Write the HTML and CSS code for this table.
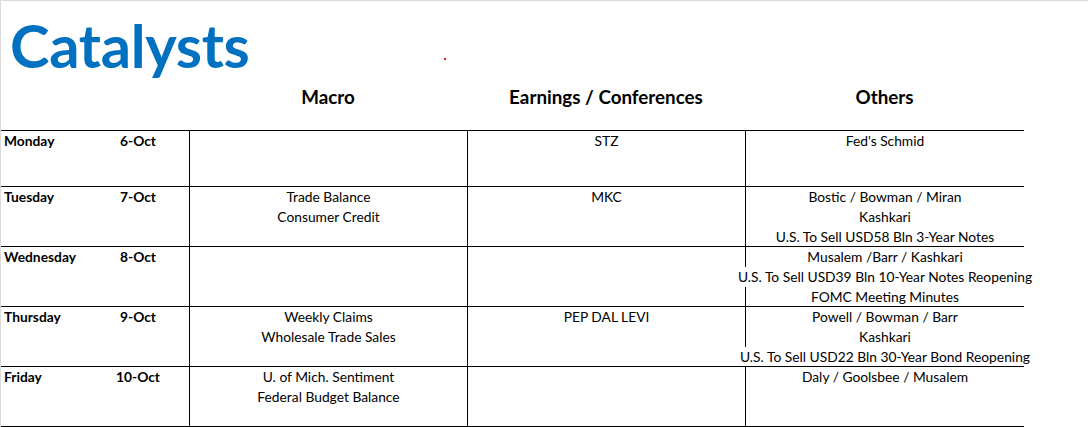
FILE: index.html
```html
<!DOCTYPE html>
<html lang="en">
<head>
<meta charset="utf-8">
<title>Catalysts</title>
<link rel="stylesheet" href="styles.css">
</head>
<body>
<div class="page">
  <span class="dot"></span>
  <h1 class="title">Catalysts</h1>
  <div class="heads">
    <div></div>
    <div class="head">Macro</div>
    <div class="head">Earnings / Conferences</div>
    <div class="head">Others</div>
  </div>
  <div class="table">
    <div class="row first">
      <div class="day"><span>Monday</span><span class="date">6-Oct</span></div>
      <div class="cell"></div>
      <div class="cell"><span>STZ</span></div>
      <div class="cell"><span>Fed's Schmid</span></div>
    </div>
    <div class="row">
      <div class="day"><span>Tuesday</span><span class="date">7-Oct</span></div>
      <div class="cell"><span>Trade Balance</span><span>Consumer Credit</span></div>
      <div class="cell"><span>MKC</span></div>
      <div class="cell"><span>Bostic / Bowman / Miran</span><span>Kashkari</span><span>U.S. To Sell USD58 Bln 3-Year Notes</span></div>
    </div>
    <div class="row">
      <div class="day"><span>Wednesday</span><span class="date">8-Oct</span></div>
      <div class="cell"></div>
      <div class="cell"></div>
      <div class="cell"><span>Musalem /Barr / Kashkari</span><span>U.S. To Sell USD39 Bln 10-Year Notes Reopening</span><span>FOMC Meeting Minutes</span></div>
    </div>
    <div class="row">
      <div class="day"><span>Thursday</span><span class="date">9-Oct</span></div>
      <div class="cell"><span>Weekly Claims</span><span>Wholesale Trade Sales</span></div>
      <div class="cell"><span>PEP DAL LEVI</span></div>
      <div class="cell"><span>Powell / Bowman / Barr</span><span>Kashkari</span><span>U.S. To Sell USD22 Bln 30-Year Bond Reopening</span></div>
    </div>
    <div class="row last">
      <div class="day"><span>Friday</span><span class="date">10-Oct</span></div>
      <div class="cell"><span>U. of Mich. Sentiment</span><span>Federal Budget Balance</span></div>
      <div class="cell"></div>
      <div class="cell"><span>Daly / Goolsbee / Musalem</span></div>
    </div>
  </div>
</div>
</body>
</html>
```

FILE: styles.css
```css
html, body {
  margin: 0;
  padding: 0;
  background: #fff;
}
body {
  font-family: Lato, "Open Sans", sans-serif;
  color: #000;
}
.page {
  position: relative;
  width: 1088px;
  height: 427px;
  box-sizing: border-box;
  border-top: 1px solid #dadada;
  border-left: 1px solid #dadada;
  overflow: hidden;
}
.dot {
  position: absolute;
  left: 443px;
  top: 57px;
  width: 2px;
  height: 2px;
  background: #e8141b;
}
.title {
  margin: 0;
  height: 80px;
  padding-left: 9px;
  font-size: 59.7px;
  font-weight: 700;
  line-height: 88px;
  color: #0070c0;
  letter-spacing: -0.3px;
}
.heads {
  display: grid;
  grid-template-columns: 188px 278px 278px 279px;
  height: 49px;
}
.head {
  text-align: center;
  font-size: 18.8px;
  font-weight: 700;
  line-height: 22px;
  padding-top: 5px;
}
.table {
  display: flex;
  flex-direction: column;
  width: 1023px;
}
.row {
  display: grid;
  grid-template-columns: 188px 278px 278px 279px;
  height: 60px;
  box-sizing: border-box;
  border-top: 1px solid #000;
  font-size: 13.8px;
  line-height: 20px;
}
.row.first {
  height: 56px;
}
.row.last {
  height: 61px;
  border-bottom: 1px solid #000;
}
.day {
  display: grid;
  grid-template-columns: 97px 74px;
  padding-left: 3px;
  font-weight: 700;
}
.date {
  text-align: center;
}
.cell {
  display: flex;
  flex-direction: column;
  align-items: center;
  border-left: 1px solid #000;
  min-width: 0;
}
.cell span {
  display: block;
  white-space: nowrap;
  background: #fff;
}
```
